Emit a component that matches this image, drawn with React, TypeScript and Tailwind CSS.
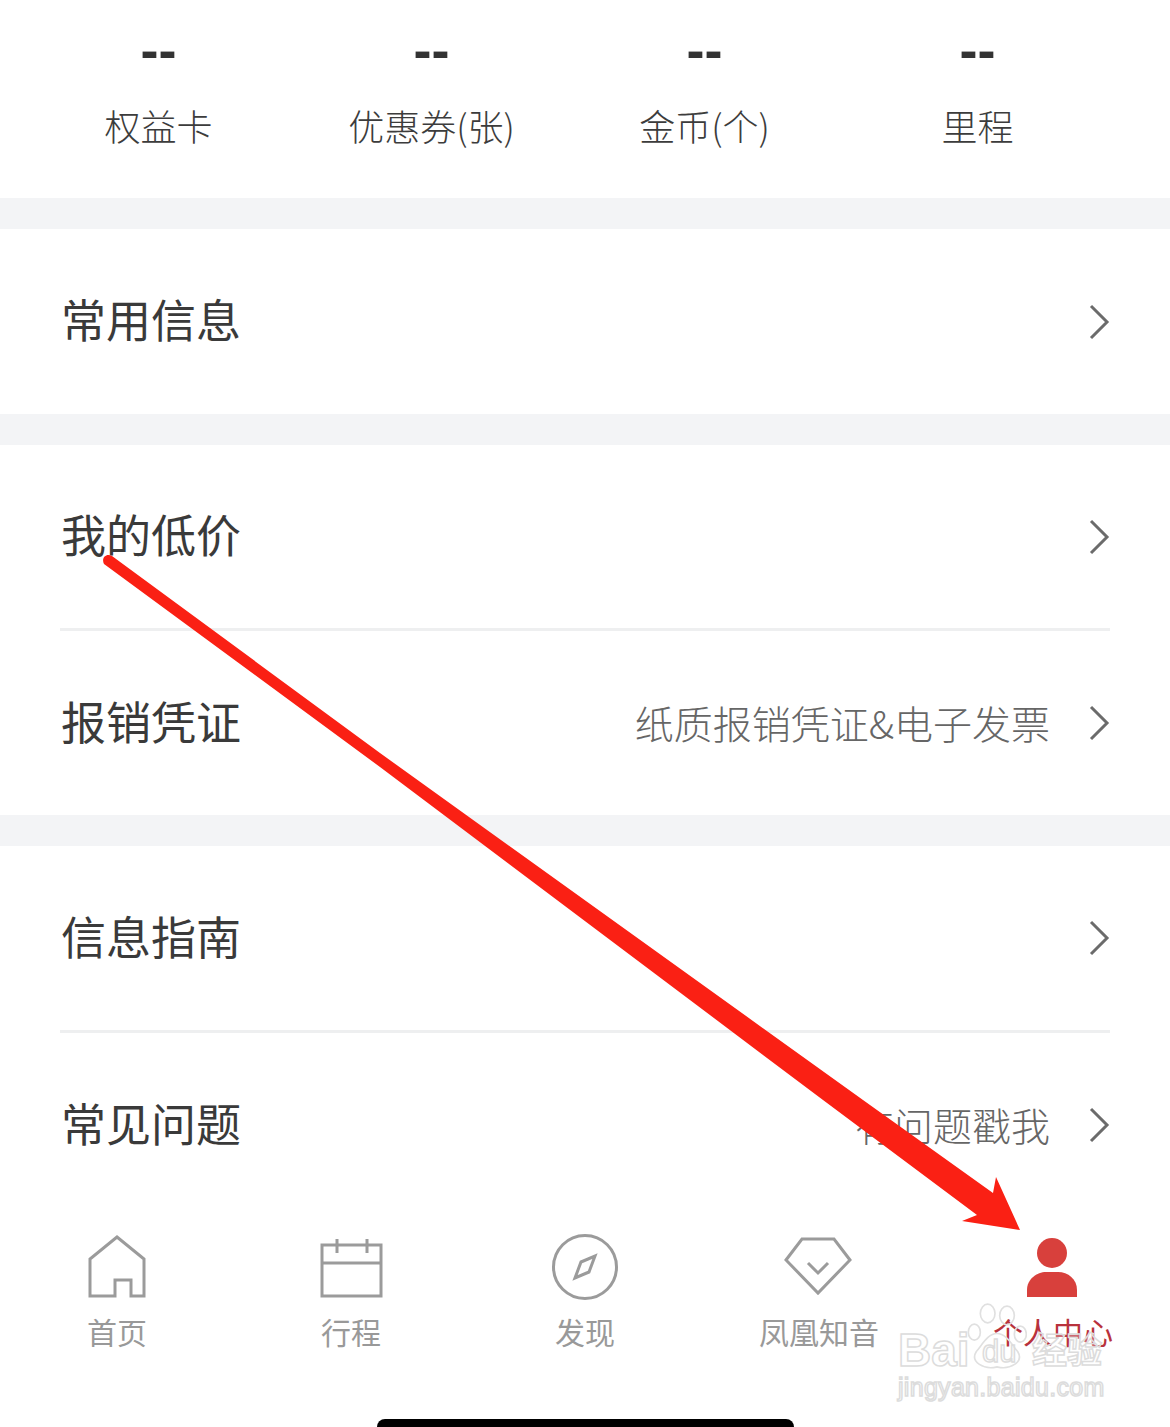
const cjk = "font-['Noto_Sans_CJK_SC','Noto_Sans',sans-serif]";
const wm = "absolute text-white/30 [-webkit-text-stroke:1.5px_#dcdcdc]";

function Chevron() {
  return (
    <svg viewBox="0 0 22 36" className="w-[22px] h-[36px]" fill="none" stroke="#6b6b6b" strokeWidth="3">
      <path d="M2 2 L18 18 L2 34" />
    </svg>
  );
}

function Row({ title, sub }: { title: string; sub?: string }) {
  return (
    <div className="h-full flex items-center pl-[61px] pr-[59px]">
      <span className="text-[45px] leading-none font-normal text-[#3a3a3a] -translate-y-[3px]">{title}</span>
      {sub ? <span className="ml-auto mr-[39px] text-[39px] leading-none font-light text-[#666] -translate-y-[1px]">{sub}</span> : <span className="ml-auto" />}
      <Chevron />
    </div>
  );
}

function Gap() {
  return <div className="h-[31px] bg-[#f3f4f6]" />;
}

function Line() {
  return <div className="h-[3px] mx-[60px] bg-[#eeeff0]" />;
}

function Stat({ label }: { label: string }) {
  return (
    <div className="flex flex-col items-center">
      <span className="font-['Liberation_Sans',sans-serif] font-bold text-[54px] leading-[48px] h-[48px] text-[#333]">--</span>
      <span className="mt-[29px] text-[36px] leading-[44px] font-light text-[#3c3c3c]">{label}</span>
    </div>
  );
}

function Tab({ label, active, children }: { label: string; active?: boolean; children: React.ReactNode }) {
  return (
    <div className="flex flex-col items-center">
      <svg viewBox="0 0 70 66" className="w-[70px] h-[66px] overflow-visible" fill="none" stroke="#9b9b9b" strokeWidth="3">
        {children}
      </svg>
      <span className={active ? "mt-[11px] text-[30px] leading-[40px] text-[#b8323c]" : "mt-[11px] text-[30px] leading-[40px] text-[#999]"}>
        {label}
      </span>
    </div>
  );
}

export default function App() {
  return (
    <div className={`relative w-[1170px] h-[1427px] overflow-hidden bg-white flex flex-col ${cjk}`}>
      <div className="h-[198px] pl-[22px] pt-[26px]">
        <div className="w-[1092px] grid grid-cols-4">
          <Stat label="权益卡" />
          <Stat label="优惠券(张)" />
          <Stat label="金币(个)" />
          <Stat label="里程" />
        </div>
      </div>
      <Gap />
      <div className="h-[185px]"><Row title="常用信息" /></div>
      <Gap />
      <div className="h-[183px]"><Row title="我的低价" /></div>
      <Line />
      <div className="h-[184px]"><Row title="报销凭证" sub="纸质报销凭证&电子发票" /></div>
      <Gap />
      <div className="h-[184px]"><Row title="信息指南" /></div>
      <Line />
      <div className="h-[184px]"><Row title="常见问题" sub="有问题戳我" /></div>

      <div className="flex-1 flex flex-col pt-[17px]">
        <div className="grid grid-cols-5">
          <Tab label="首页">
            <path d="M8 62 V25 L35 3 L62 25 V62 H49 V46 H33 V62 Z" />
          </Tab>
          <Tab label="行程">
            <path d="M6 11 H65 V62 H6 Z M6 29 H65 M21 5 V19 M51 5 V19" />
          </Tab>
          <Tab label="发现">
            <circle cx="35" cy="33" r="31.5" />
            <path d="M45 22 L39 38 L25 44 L31 28 Z" />
          </Tab>
          <Tab label="凤凰知音">
            <path d="M18 5 H50 L66 26 L34 59 L2 26 Z" />
            <path d="M24 29 L34 39 L44 29" />
          </Tab>
          <Tab label="个人中心" active>
            <circle cx="34" cy="19" r="15" fill="#d8403c" stroke="none" />
            <path d="M9 63 V56 C9 45 19 38 28 38 H40 C50 38 59 45 59 56 V63 Z" fill="#d8403c" stroke="none" />
          </Tab>
        </div>
        <div className="mt-auto flex justify-center">
          <div className="w-[417px] h-[8px] bg-black rounded-t-[8px]" />
        </div>
      </div>

      {/* annotation arrow over the screenshot */}
      <svg viewBox="0 0 1170 1427" className="absolute inset-0 w-[1170px] h-[1427px] pointer-events-none">
        <path
          d="M112 556 L380 753 L863 1100 L993 1193 L996 1177 L1020 1230 L962 1221 L977 1215 L823 1100 L380 767 L104 564 C101 558 106 553 112 556 Z"
          fill="#fa2014"
        />
      </svg>

      {/* watermark over the tab bar */}
      <div className="absolute left-[895px] top-[1300px] w-[220px] h-[100px] pointer-events-none">
        <svg viewBox="0 0 90 100" className="absolute left-[72px] top-[2px] w-[60px] h-[67px]" fill="none" stroke="#e0e0e0" strokeWidth="2.5">
          <ellipse cx="31" cy="17" rx="11" ry="14" />
          <ellipse cx="60" cy="20" rx="11" ry="14" />
          <ellipse cx="11" cy="45" rx="9" ry="12" />
          <ellipse cx="80" cy="48" rx="9" ry="12" />
          <path d="M45 47 C32 47 24 62 14 74 C4 90 26 102 45 97 C64 102 86 90 76 74 C66 62 58 47 45 47 Z" />
        </svg>
        <span className={`${wm} left-[3px] top-[25px] font-['Liberation_Sans',sans-serif] font-bold text-[46px] leading-[50px]`}>Bai</span>
        <span className={`${wm} left-[87px] top-[36px] font-['Liberation_Sans',sans-serif] text-[31px] leading-[32px]`}>du</span>
        <span className={`${wm} left-[137px] top-[28px] font-bold text-[35px] leading-[40px]`}>经验</span>
        <span className={`${wm} left-[3px] top-[73px] font-['Liberation_Sans',sans-serif] text-[25px] leading-[28px] tracking-[0.3px]`}>jingyan.baidu.com</span>
      </div>
    </div>
  );
}
